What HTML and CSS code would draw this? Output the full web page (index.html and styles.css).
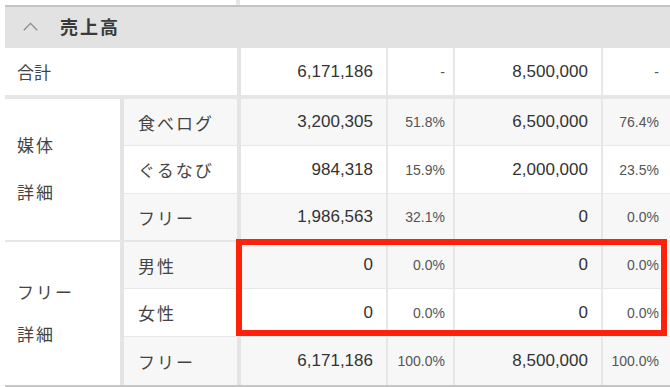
FILE: index.html
```html
<!DOCTYPE html>
<html lang="ja">
<head>
<meta charset="utf-8">
<link rel="stylesheet" href="styles.css">
</head>
<body>
<div class="wrap">
  <div class="prev"></div>
  <div class="sect">
    <div class="sect-head">
      <svg class="caret" width="15" height="9" viewBox="0 0 15 9"><path d="M0.8 8.2 L7.5 1.4 L14.2 8.2" fill="none" stroke="#8a8a8a" stroke-width="1.3"/></svg>
      <span class="sect-title">売上高</span>
    </div>
    <div class="grid">
      <div class="c lbl total span2 w4 tight">合計</div>
      <div class="c num total">6,171,186</div>
      <div class="c pct total">-</div>
      <div class="c num total">8,500,000</div>
      <div class="c pct total end">-</div>

      <div class="c grp g1 w4">媒体<br>詳細</div>
      <div class="c lbl w4 alt">食べログ</div>
      <div class="c num alt">3,200,305</div>
      <div class="c pct alt">51.8%</div>
      <div class="c num alt">6,500,000</div>
      <div class="c pct alt end">76.4%</div>

      <div class="c lbl w4">ぐるなび</div>
      <div class="c num">984,318</div>
      <div class="c pct">15.9%</div>
      <div class="c num">2,000,000</div>
      <div class="c pct end">23.5%</div>

      <div class="c lbl w4 alt gl">フリー</div>
      <div class="c num alt gl">1,986,563</div>
      <div class="c pct alt gl">32.1%</div>
      <div class="c num alt gl">0</div>
      <div class="c pct alt gl end">0.0%</div>

      <div class="c grp g2 w4">フリー<br>詳細</div>
      <div class="c lbl w4 alt">男性</div>
      <div class="c num alt">0</div>
      <div class="c pct alt">0.0%</div>
      <div class="c num alt">0</div>
      <div class="c pct alt end">0.0%</div>

      <div class="c lbl w4">女性</div>
      <div class="c num">0</div>
      <div class="c pct">0.0%</div>
      <div class="c num">0</div>
      <div class="c pct end">0.0%</div>

      <div class="c lbl w4 alt last">フリー</div>
      <div class="c num alt last">6,171,186</div>
      <div class="c pct alt last">100.0%</div>
      <div class="c num alt last">8,500,000</div>
      <div class="c pct alt last end">100.0%</div>
    </div>
    <div class="highlight"></div>
  </div>
</div>
</body>
</html>
```
FILE: styles.css
```css
* { box-sizing: border-box; }
html, body { margin: 0; padding: 0; background: #fff; }
body {
  font-family: "Liberation Sans", "Noto Sans CJK JP", sans-serif;
  color: #333;
  width: 670px;
  height: 387px;
  overflow: hidden;
}
.wrap { padding-left: 5px; width: 670px; }
.prev {
  height: 5px;
  width: 4px;
  margin-left: 231px;
  background: #e6e6e6;
}
.sect { position: relative; }
.sect-head {
  height: 43px;
  border-top: 2px solid #c4c4c4;
  background: #e2e2e2;
  display: flex;
  align-items: center;
  padding-left: 18px;
  padding-bottom: 3px;
}
.caret { display: block; margin-top: 1px; }
.sect-title {
  margin-left: 22px;
  font-size: 18px;
  font-weight: bold;
  letter-spacing: 2px;
  color: #3a3a3a;
}
.grid {
  display: grid;
  grid-template-columns: 119px 117px 147px 67px 148px 1fr;
  grid-template-rows: 51px 47px 48px 48px 47px 48px 48px;
  border-bottom: 2px solid #c6c6c6;
}
.c {
  display: flex;
  align-items: center;
  border-right: 2px solid #e7e7e7;
  border-bottom: 1px solid #e8e8e8;
  background: #fff;
  min-width: 0;
  white-space: nowrap;
}
.w4 { border-right-width: 4px; border-right-color: #e4e4e4; }
.end { border-right: 0; }
.alt { background: #f7f7f7; }
.total { border-bottom: 4px solid #e6e6e6; }
.gl { border-bottom: 2px solid #e6e6e6; }
.last { border-bottom: 0; }
.span2 { grid-column: span 2; }
.lbl {
  font-size: 17px;
  letter-spacing: 2px;
  color: #444;
  padding-left: 14px;
}
.lbl.tight { letter-spacing: 0; padding-left: 12px; }
.grp {
  grid-row: span 3;
  font-size: 17px;
  letter-spacing: 2px;
  color: #444;
  padding-left: 12px;
  border-bottom: 2px solid #e6e6e6;
}
.g1 { line-height: 47px; padding-top: 1px; }
.g2 { border-bottom: 0; line-height: 42px; padding-top: 3px; }
.num {
  justify-content: flex-end;
  padding-right: 13px;
  font-size: 17px;
  color: #333;
}
.pct {
  justify-content: flex-end;
  padding-right: 8px;
  font-size: 14px;
  color: #555;
}
.pct.end { padding-right: 11px; }
.highlight {
  position: absolute;
  left: 231px;
  top: 234px;
  width: 431px;
  height: 97px;
  border: 6px solid #ff2208;
}
```
